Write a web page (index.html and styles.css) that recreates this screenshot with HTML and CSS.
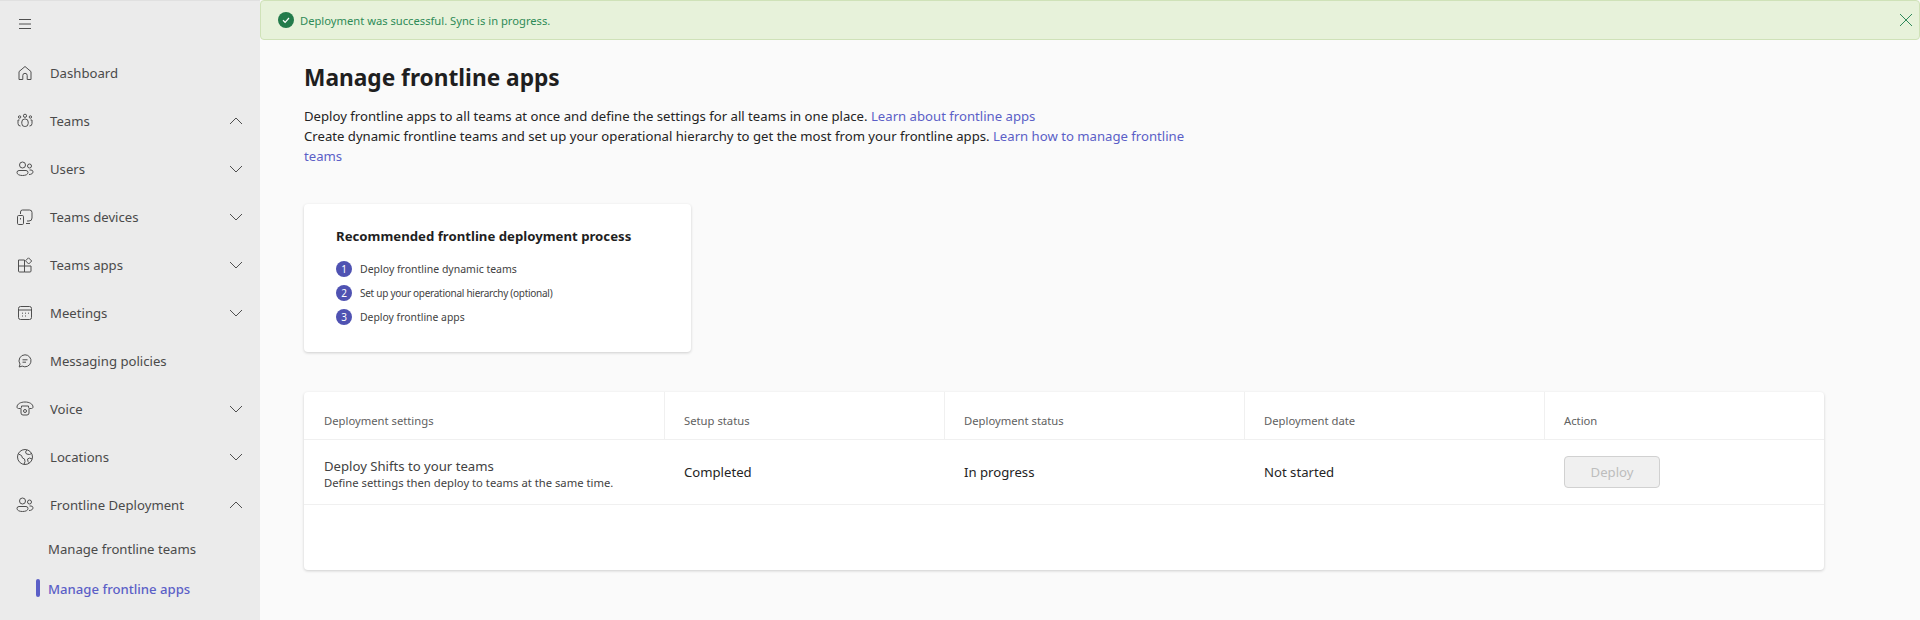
FILE: index.html
```html
<!DOCTYPE html>
<html lang="en">
<head>
    <meta charset="UTF-8">
    <title>Manage frontline apps</title>
    <link rel="stylesheet" href="styles.css">
</head>
<body>
    <nav class="sidebar">
        <div class="menu-btn">
            <svg class="icon" viewBox="0 0 20 20"><path d="M4 5.500h12M4 10h12M4 14.500h12"/></svg>
        </div>
        <a class="nav-item">
            <svg class="icon" viewBox="0 0 20 20"><path d="M4 16.500V8.600L10 3.500l6 5.100V16.500h-3.800V12.500a2.200 2.200 0 0 0-4.400 0v4H4z"/></svg>
            <span>Dashboard</span>
        </a>
        <a class="nav-item">
            <svg class="icon" viewBox="0 0 20 20"><circle cx="10" cy="4.800" r="1.600"/><circle cx="4.600" cy="6" r="1.200"/><circle cx="15.400" cy="6" r="1.200"/><rect x="6.800" y="8" width="6.400" height="7.500" rx="3"/><path d="M4.500 9H3v3.500a2.500 2.500 0 0 0 2.500 2.500M15.500 9H17v3.500a2.500 2.500 0 0 1-2.500 2.500"/></svg>
            <span>Teams</span>
            <svg class="chevron" viewBox="0 0 14 14"><path d="M1 10l6-6 6 6"/></svg>
        </a>
        <a class="nav-item">
            <svg class="icon" viewBox="0 0 20 20"><circle cx="7.500" cy="6" r="3"/><circle cx="14.500" cy="7" r="2"/><path d="M2 13.500a2 2 0 0 1 2-2h7a2 2 0 0 1 2 2c0 2-2.500 3-5.500 3S2 15.500 2 13.500z"/><path d="M14.500 11H16a2 2 0 0 1 2 1.800c0 1.700-1.600 2.700-4 2.700"/></svg>
            <span>Users</span>
            <svg class="chevron" viewBox="0 0 14 14"><path d="M1 4l6 6 6-6"/></svg>
        </a>
        <a class="nav-item">
            <svg class="icon" viewBox="0 0 20 20"><path d="M5.500 7V5a2 2 0 0 1 2-2h7a2.500 2.500 0 0 1 2.500 2.500V11a3 3 0 0 1-3 3h-2M11 16.500h4"/><rect x="2.500" y="8.500" width="6" height="9" rx="1.200"/><path d="M5.500 11v1.500"/></svg>
            <span>Teams devices</span>
            <svg class="chevron" viewBox="0 0 14 14"><path d="M1 4l6 6 6-6"/></svg>
        </a>
        <a class="nav-item">
            <svg class="icon" viewBox="0 0 20 20"><path d="M3.500 5h6v12h-5a1 1 0 0 1-1-1V5zM3.500 11h12.500v5a1 1 0 0 1-1 1H9.500M9.500 11V5"/><path d="M10.500 5.800l3-3 3.200 3.200-3 3z"/></svg>
            <span>Teams apps</span>
            <svg class="chevron" viewBox="0 0 14 14"><path d="M1 4l6 6 6-6"/></svg>
        </a>
        <a class="nav-item">
            <svg class="icon" viewBox="0 0 20 20"><rect x="3.500" y="3.500" width="13" height="13" rx="2"/><path d="M3.500 7h13"/><path d="M7 10.200h1M10 10.200h1M13 10.200h1M7 13h1M10 13h1"/></svg>
            <span>Meetings</span>
            <svg class="chevron" viewBox="0 0 14 14"><path d="M1 4l6 6 6-6"/></svg>
        </a>
        <a class="nav-item">
            <svg class="icon" viewBox="0 0 20 20"><path d="M10 3.800a6 6 0 1 1-2.800 11.300L4.200 16l.8-2.900A6 6 0 0 1 10 3.800z"/><path d="M7.500 8.800h5M7.500 11.200h3.500"/></svg>
            <span>Messaging policies</span>
        </a>
        <a class="nav-item">
            <svg class="icon" viewBox="0 0 20 20"><path d="M2 8c0-3 3.500-5 8-5s8 2 8 5c0 1-.8 1.500-1.500 1.500h-1.500c-1 0-1.500-.6-1.500-1.500V7H6.500v1c0 .9-.5 1.500-1.500 1.500H3.500C2.800 9.500 2 9 2 8z"/><path d="M6 9.500v4.500a2 2 0 0 0 2 2h4a2 2 0 0 0 2-2V9.500"/><circle cx="10" cy="12" r="1.500"/></svg>
            <span>Voice</span>
            <svg class="chevron" viewBox="0 0 14 14"><path d="M1 4l6 6 6-6"/></svg>
        </a>
        <a class="nav-item">
            <svg class="icon" viewBox="0 0 20 20"><circle cx="10" cy="10" r="7.500"/><path d="M3.500 7l3 1.500 1 2.500 2 1 .5 2.500-1 3M12 3l-1.500 2 1 2 3 .5 2-1M17 12l-2.500-1-2 1 .5 2.500 1.500 1.500"/></svg>
            <span>Locations</span>
            <svg class="chevron" viewBox="0 0 14 14"><path d="M1 4l6 6 6-6"/></svg>
        </a>
        <a class="nav-item">
            <svg class="icon" viewBox="0 0 20 20"><circle cx="7.500" cy="6" r="3"/><circle cx="14.500" cy="7" r="2"/><path d="M2 13.500a2 2 0 0 1 2-2h7a2 2 0 0 1 2 2c0 2-2.500 3-5.500 3S2 15.500 2 13.500z"/><path d="M14.500 11H16a2 2 0 0 1 2 1.800c0 1.700-1.600 2.700-4 2.700"/></svg>
            <span>Frontline Deployment</span>
            <svg class="chevron" viewBox="0 0 14 14"><path d="M1 10l6-6 6 6"/></svg>
        </a>
        <a class="sub-item">Manage frontline teams</a>
        <a class="sub-item active">Manage frontline apps</a>
    </nav>

    <div class="main">
        <div class="banner">
            <svg class="banner-check" viewBox="0 0 16 16"><circle cx="8" cy="8" r="8"/><path d="M5 8.300l2.100 2L11 6"/></svg>
            <span class="banner-text">Deployment was successful. Sync is in progress.</span>
            <svg class="banner-close" viewBox="0 0 14 14"><path d="M1 1l12 12M13 1L1 13"/></svg>
        </div>

        <main class="content">
            <h1>Manage frontline apps</h1>
            <p class="intro">
                Deploy frontline apps to all teams at once and define the settings for all teams in one place. <a>Learn about frontline apps</a><br>
                Create dynamic frontline teams and set up your operational hierarchy to get the most from your frontline apps. <a>Learn how to manage frontline teams</a>
            </p>

            <section class="process-card">
                <h2>Recommended frontline deployment process</h2>
                <ol class="steps">
                    <li class="step-one"><span class="step-num">1</span>Deploy frontline dynamic teams</li>
                    <li class="step-two"><span class="step-num">2</span>Set up your operational hierarchy (optional)</li>
                    <li class="step-three"><span class="step-num">3</span>Deploy frontline apps</li>
                </ol>
            </section>

            <section class="table-card">
                <table>
                    <thead>
                        <tr>
                            <th class="col-settings">Deployment settings</th>
                            <th class="col-setup">Setup status</th>
                            <th class="col-deploy">Deployment status</th>
                            <th class="col-date">Deployment date</th>
                            <th>Action</th>
                        </tr>
                    </thead>
                    <tbody>
                        <tr>
                            <td>
                                <div class="row-title">Deploy Shifts to your teams</div>
                                <div class="row-desc">Define settings then deploy to teams at the same time.</div>
                            </td>
                            <td>Completed</td>
                            <td>In progress</td>
                            <td>Not started</td>
                            <td><button disabled>Deploy</button></td>
                        </tr>
                    </tbody>
                </table>
            </section>
        </main>
    </div>
</body>
</html>
```

FILE: styles.css
```css
* {
    box-sizing: border-box;
}

html, body {
    height: 100%;
}

body {
    margin: 0;
    display: flex;
    overflow: hidden;
    font-family: "Noto Sans", "Open Sans", Arial, sans-serif;
    font-size: 13.15px;
    color: #242424;
    background-color: #fafafa;
}

a {
    color: #5b5fc7;
}

/* sidebar */
.sidebar {
    flex: 0 0 260px;
    background-color: #ebebeb;
    box-shadow: inset 0 1px 0 #e0e0e0;
}

.menu-btn {
    height: 49px;
    padding: 14px 0 0 15px;
}

.icon {
    flex: none;
    width: 20px;
    height: 20px;
    fill: none;
    stroke: #4f4f4f;
    stroke-width: 1;
}

.nav-item {
    display: flex;
    align-items: center;
    height: 48px;
    padding: 0 17px 0 15px;
    gap: 15px;
    color: #4a4a4a;
}

.chevron {
    width: 14px;
    height: 14px;
    margin-left: auto;
    fill: none;
    stroke: #4f4f4f;
    stroke-width: 1;
}

.sub-item {
    display: flex;
    align-items: center;
    position: relative;
    height: 40px;
    padding-left: 48px;
    color: #4a4a4a;
}

.sub-item.active {
    color: #5b5fc7;
    font-weight: 500;
}

.sub-item.active::before {
    content: "";
    position: absolute;
    left: 36px;
    top: 10px;
    width: 4px;
    height: 18px;
    border-radius: 2px;
    background-color: #5b5fc7;
}

/* banner */
.main {
    flex: 1;
    min-width: 0;
}

.banner {
    display: flex;
    align-items: center;
    height: 40px;
    padding: 0 6px 0 17px;
    background-color: #e7f2da;
    border: 1px solid #cfe2b8;
    border-radius: 4px;
    color: #2e8b57;
    font-size: 11.2px;
}

.banner-check {
    width: 16px;
    height: 16px;
    margin-right: 6px;
    fill: #237b4b;
    stroke: none;
}

.banner-check path {
    fill: none;
    stroke: #fff;
    stroke-width: 1.2;
}

.banner-close {
    width: 14px;
    height: 14px;
    margin-left: auto;
    fill: none;
    stroke: #2f8a5b;
    stroke-width: 1;
}

/* content */
.content {
    padding: 0 44px;
}

h1 {
    margin: 21px 0 0;
    font-size: 22.7px;
    line-height: 34px;
    font-weight: 700;
    color: #1f1f1f;
}

.intro {
    width: 900px;
    margin: 11px 0 0;
    line-height: 20px;
}

.process-card {
    width: 387px;
    height: 148px;
    margin-top: 38px;
    padding: 22px 32px 0;
    background-color: #fff;
    border-radius: 4px;
    box-shadow: 0 1px 3px rgba(0, 0, 0, 0.18);
}

h2 {
    margin: 0;
    font-size: 13.2px;
    line-height: 20px;
    font-weight: 700;
    color: #1f1f1f;
}

.steps {
    list-style: none;
    margin: 11px 0 0;
    padding: 0;
    color: #424242;
}

.steps li {
    display: flex;
    align-items: center;
    gap: 8px;
    height: 24px;
}

.step-one {
    font-size: 10.5px;
}

.step-two {
    font-size: 10px;
    letter-spacing: -0.27px;
}

.step-three {
    font-size: 10.4px;
}

.step-num {
    flex: none;
    width: 16px;
    height: 16px;
    border-radius: 50%;
    background-color: #4f52b2;
    color: #fff;
    font-size: 10px;
    letter-spacing: 0;
    line-height: 16px;
    text-align: center;
}

.table-card {
    width: 1520px;
    height: 178px;
    margin-top: 40px;
    background-color: #fff;
    border-radius: 4px;
    box-shadow: 0 1px 3px rgba(0, 0, 0, 0.18);
}

table {
    width: 100%;
    table-layout: fixed;
    border-collapse: separate;
    border-spacing: 0;
}

th {
    height: 48px;
    padding: 10px 20px 0;
    text-align: left;
    font-size: 11.25px;
    font-weight: 400;
    color: #616161;
    border-bottom: 1px solid #f0f0f0;
}

th + th {
    padding-left: 19px;
    border-left: 1px solid #f0f0f0;
}

.col-settings {
    width: 360px;
}

.col-setup {
    width: 280px;
}

.col-deploy {
    width: 300px;
}

.col-date {
    width: 300px;
}

td {
    height: 65px;
    padding: 0 20px;
    font-size: 13.15px;
    border-bottom: 1px solid #f0f0f0;
}

.row-title {
    padding-top: 4px;
    line-height: 18px;
    color: #424242;
}

.row-desc {
    font-size: 11.25px;
    line-height: 16px;
    color: #424242;
}

button {
    display: block;
    width: 96px;
    height: 32px;
    padding: 0;
    background-color: #f0f0f0;
    border: 1px solid #d1d1d1;
    border-radius: 4px;
    color: #bdbdbd;
    font-family: inherit;
    font-size: 13.15px;
}
```
